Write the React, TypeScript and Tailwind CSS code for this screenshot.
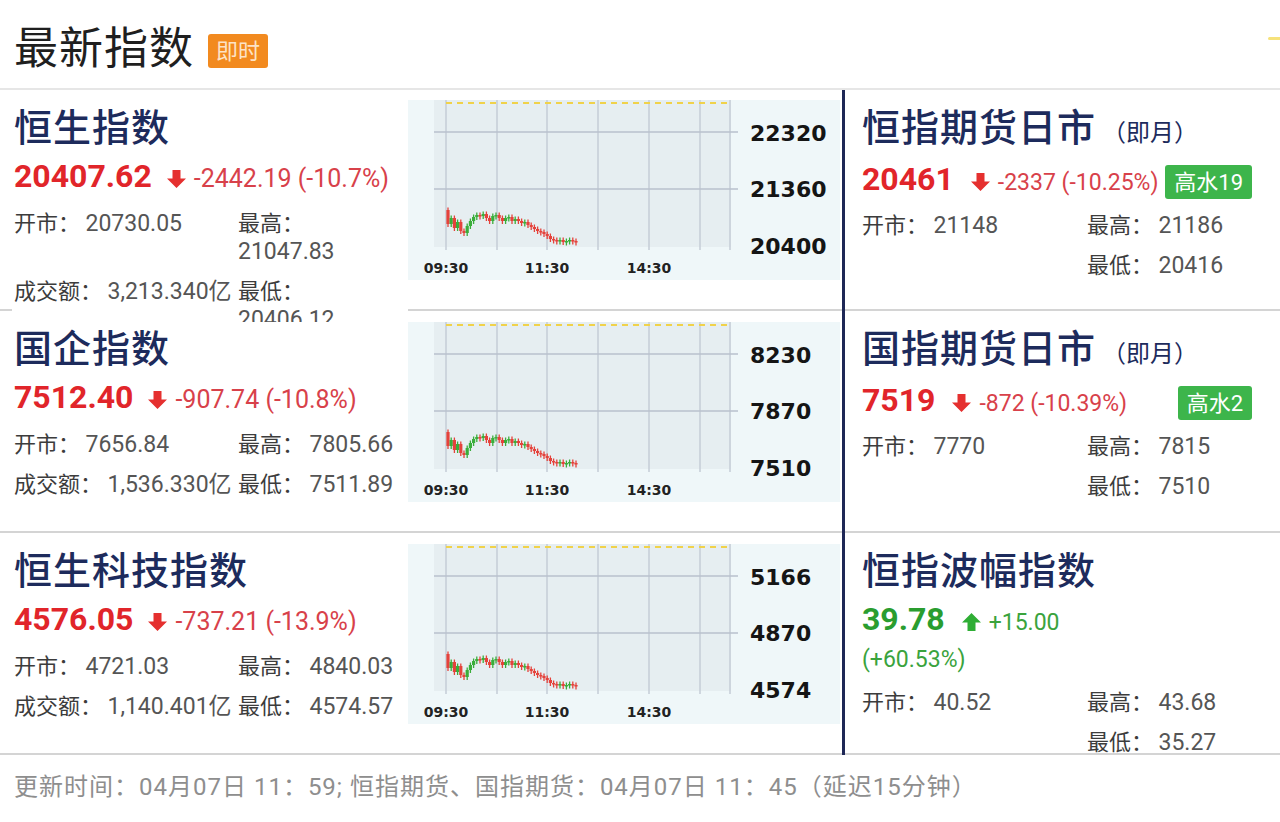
import React from 'react'

interface IndexRow {
  name: string
  price: string
  change: string
  open: string
  high: string
  low: string
  turnover: string
  axis: string[]
}

interface FutureRow {
  name: string
  suffix?: string
  price: string
  change: string
  up: boolean
  badge?: string
  open: string
  high: string
  low: string
}

const indices: IndexRow[] = [
  { name: '恒生指数', price: '20407.62', change: '-2442.19 (-10.7%)', open: '20730.05', high: '21047.83', low: '20406.12', turnover: '3,213.340亿', axis: ['22320', '21360', '20400'] },
  { name: '国企指数', price: '7512.40', change: '-907.74 (-10.8%)', open: '7656.84', high: '7805.66', low: '7511.89', turnover: '1,536.330亿', axis: ['8230', '7870', '7510'] },
  { name: '恒生科技指数', price: '4576.05', change: '-737.21 (-13.9%)', open: '4721.03', high: '4840.03', low: '4574.57', turnover: '1,140.401亿', axis: ['5166', '4870', '4574'] },
]

const futures: FutureRow[] = [
  { name: '恒指期货日市', suffix: '（即月）', price: '20461', change: '-2337 (-10.25%)', up: false, badge: '高水19', open: '21148', high: '21186', low: '20416' },
  { name: '国指期货日市', suffix: '（即月）', price: '7519', change: '-872 (-10.39%)', up: false, badge: '高水2', open: '7770', high: '7815', low: '7510' },
  { name: '恒指波幅指数', price: '39.78', change: '+15.00 (+60.53%)', up: true, open: '40.52', high: '43.68', low: '35.27' },
]

// intraday closes, in chart pixels (bigger = lower price)
const closes = [124, 118, 128, 122, 131, 133, 126, 121, 117, 115, 116, 114, 118, 121, 116, 115, 118, 121, 118, 117, 121, 119, 121, 123, 122, 125, 127, 129, 131, 132, 134, 136, 139, 140, 141, 140, 142, 141, 140, 141, 142]

function Arrow({ up }: { up: boolean }) {
  return (
    <svg width="19" height="20" viewBox="0 0 19 20" className="inline-block align-[-2px]">
      <path
        d={up ? 'M9.5 1L19 10.5H13.5V19H5.5V10.5H0Z' : 'M5.5 1H13.5V9.5H19L9.5 19L0 9.5H5.5Z'}
        fill={up ? '#2fae35' : '#e5302f'}
      />
    </svg>
  )
}

function MiniChart({ axis }: { axis: string[] }) {
  return (
    <svg width="432" height="180" viewBox="0 0 432 180" className="block">
      <rect width="432" height="180" fill="#eff7f9" />
      <rect x="26" y="0" width="297" height="147" fill="#e6eef1" />
      {[38, 89, 139, 190, 241, 292, 322].map(x => (
        <line key={x} x1={x} x2={x} y1={0} y2={150} stroke="#c4ccd6" strokeWidth="1.5" />
      ))}
      {[32, 89].map(y => (
        <line key={y} x1={26} x2={330} y1={y} y2={y} stroke="#b8c1cc" strokeWidth="1.5" />
      ))}
      <line x1={38} x2={322} y1={3} y2={3} stroke="#f0d24a" strokeWidth="2" strokeDasharray="6 5" />
      {closes.map((c, i) => {
        const o = i === 0 ? 110 : closes[i - 1]
        const x = 40 + i * 3.2
        const top = Math.min(o, c)
        const h = Math.max(Math.abs(o - c), 1.5)
        const color = c > o ? '#e5423b' : '#3aae3a'
        return (
          <g key={i}>
            <line x1={x} x2={x} y1={top - 2.5} y2={top + h + 3} stroke={color} strokeWidth="1.3" />
            <rect x={x - 1.6} y={top} width="3.2" height={h} fill={color} />
          </g>
        )
      })}
      {axis.map((label, i) => (
        <text key={label} x={342} y={[33, 89, 146][i]} dominantBaseline="central" fontFamily="DejaVu Sans, sans-serif" fontWeight="bold" fontSize="22" fill="#151515">
          {label}
        </text>
      ))}
      {['09:30', '11:30', '14:30'].map((t, i) => (
        <text key={t} x={[38, 139, 241][i]} y={168} textAnchor="middle" dominantBaseline="central" fontFamily="DejaVu Sans, sans-serif" fontWeight="bold" fontSize="14" fill="#222">
          {t}
        </text>
      ))}
    </svg>
  )
}

function Stat({ label, value }: { label: string; value?: string }) {
  if (!value) return <div />
  return (
    <div>
      <span className="align-top text-[22px] text-[#3c3c3c]">{label}</span>{' '}
      <span className="align-top text-[23px] text-[#555]">{value}</span>
    </div>
  )
}

export default function App() {
  const rowH = ['h-[221px]', 'h-[222px]', 'h-[222px]']
  return (
    <div className="w-[1280px] h-[822px] bg-white overflow-hidden font-[Roboto,'Noto_Sans_CJK_SC',sans-serif]">
      {/* Header */}
      <div className="h-[90px] flex items-center pl-[14px] pt-[14px] border-b-2 border-[#e6e6e6]">
        <h1 className="text-[44px] leading-none text-[#1f1f1f] tracking-[1px] pb-[4px]">最新指数</h1>
        <span className="ml-[14px] h-[34px] px-[8px] flex items-center rounded-[3px] bg-[#f28a1f] text-[22px] text-[#fde3c6]">即时</span>
        <div className="ml-auto mb-[26px] w-[12px] h-[3px] rounded-l-full bg-[#f6e27a]" />
      </div>

      <div className="flex">
        {/* Left: indices + charts */}
        <div className="w-[842px]">
          {indices.map((row, idx) => (
            <div key={row.name} className={`${rowH[idx]} flex border-b-2 border-[#d4d4d4]`}>
              <div className={`ml-[12px] w-[396px] pl-[2px] relative bg-white overflow-hidden ${idx === 0 ? 'z-20 h-[232px] shrink-0' : 'z-10'}`}>
                <div className="mt-[16px] h-[44px] leading-[44px] text-[38px] font-medium text-[#1d2b5c] tracking-[1px]">{row.name}</div>
                <div className="mt-[6px] leading-[40px] whitespace-nowrap">
                  <span className="text-[32px] font-bold text-[#e1252a]">{row.price}</span>
                  <span className="ml-[15px]"><Arrow up={false} /></span>
                  <span className="ml-[8px] text-[25px] text-[#d8414a]">{row.change}</span>
                </div>
                <div className="mt-[8px] grid grid-cols-[224px_158px] gap-y-[12px] leading-[28px] text-[22px]">
                  <Stat label="开市：" value={row.open} />
                  <Stat label="最高：" value={row.high} />
                  <Stat label="成交额：" value={row.turnover} />
                  <Stat label="最低：" value={row.low} />
                </div>
              </div>
              <div className={idx === 0 ? 'pt-[10px]' : 'pt-[11px]'}>
                <MiniChart axis={row.axis} />
              </div>
            </div>
          ))}
        </div>

        {/* Divider */}
        <div className="w-[3px] bg-[#1e2756]" />

        {/* Right: futures */}
        <div className="flex-1">
          {futures.map((row, idx) => (
            <div key={row.name} className={`${rowH[idx]} flex flex-col border-b-2 border-[#d4d4d4] pt-[16px] pl-[17px] pr-[28px]`}>
              <div className="h-[44px] leading-[44px] whitespace-nowrap text-[#1d2b5c]">
                <span className="text-[38px] font-medium tracking-[1px]">{row.name}</span>
                {row.suffix && <span className="text-[24px] ml-[6px]">{row.suffix}</span>}
              </div>
              <div className={`flex items-start ${row.badge ? 'mt-[13px] h-[38px]' : 'mt-[10px]'}`}>
                <div className="w-[301px] leading-[37px] text-[23px]">
                  <span className={`leading-none text-[32px] font-bold ${row.up ? 'text-[#2a9d2f]' : 'text-[#e1252a]'}`}>{row.price}</span>
                  <span className="ml-[17px] leading-none"><Arrow up={row.up} /></span>
                  <span className={`ml-[8px] leading-none ${row.up ? 'text-[#3aa33d]' : 'text-[#d8414a]'}`}>{row.change}</span>
                </div>
                <div className="flex-1 flex justify-end pt-[2px]">
                  {row.badge && (
                    <span className="h-[34px] px-[9px] flex items-center rounded-[3px] bg-[#3db54b] text-[22px] text-white">{row.badge}</span>
                  )}
                </div>
              </div>
              <div className="mt-[11px] grid grid-cols-[225px_1fr] gap-y-[12px] leading-[28px] text-[22px]">
                <Stat label="开市：" value={row.open} />
                <Stat label="最高：" value={row.high} />
                <div />
                <Stat label="最低：" value={row.low} />
              </div>
            </div>
          ))}
        </div>
      </div>

      {/* Footer */}
      <div className="pl-[14px] pt-[16px] leading-[32px] text-[24px] tracking-[1px] text-[#8e8e8e] whitespace-nowrap">
        更新时间：04月07日 11：59; 恒指期货、国指期货：04月07日 11：45（延迟15分钟）
      </div>
    </div>
  )
}
